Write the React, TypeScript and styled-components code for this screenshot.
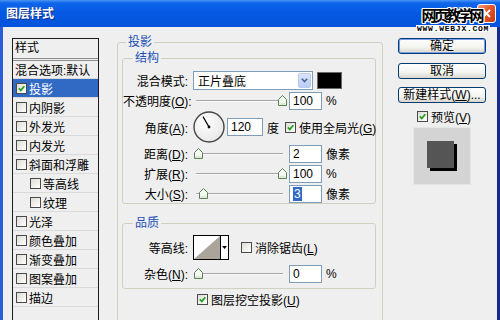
import React from "react";
import styled, { createGlobalStyle } from "styled-components";

const Global = createGlobalStyle`
  html, body { margin: 0; padding: 0; background: #efefef; }
  body {
    font-family: "Liberation Sans", "Noto Sans CJK SC", sans-serif;
    font-size: 12px;
    color: #000;
  }
  * { box-sizing: border-box; }
`;

const Window = styled.div`
  position: relative;
  width: 500px;
  height: 320px;
  overflow: hidden;
  display: flex;
  flex-direction: column;
  background: #efefef;
`;

const TitleBar = styled.div`
  height: 27px;
  flex: none;
  display: flex;
  align-items: center;
  padding-left: 6px;
  background: linear-gradient(180deg, #4a94f5 0px, #0f66ea 3px, #0559e3 45%, #0452db 100%);
  color: #fff;
  font-weight: bold;
  font-size: 12px;
  line-height: 14px;
`;

const TitleText = styled.span`
  flex: 1;
  text-shadow: 1px 1px 0 #0a2c8c;
`;

const CloseButton = styled.div`
  width: 19px;
  height: 19px;
  margin-right: 4px;
  border: 1px solid #fff;
  border-radius: 3px;
  background: linear-gradient(135deg, #f19a7a 0%, #e2572f 45%, #c9380f 100%);
  display: flex;
  align-items: center;
  justify-content: center;
`;

const Watermark = styled.div`
  position: absolute;
  top: 7px;
  left: 416px;
  display: flex;
  flex-direction: column;
  align-items: center;
  pointer-events: none;
`;

const WatermarkTitle = styled.span`
  font-family: "Noto Sans CJK SC", sans-serif;
  font-size: 15px;
  line-height: 16px;
  height: 16px;
  letter-spacing: -3px;
  padding-right: 3px;
  font-weight: bold;
  color: #000;
  text-shadow: 1px 0 0 #fff, -1px 0 0 #fff, 0 1px 0 #fff, 0 -1px 0 #fff, 1px 1px 0 #fff, -1px -1px 0 #fff, 1px -1px 0 #fff, -1px 1px 0 #fff;
`;

const WatermarkUrl = styled.span`
  margin-top: 2px;
  font-family: "Liberation Mono", monospace;
  font-weight: bold;
  font-size: 8px;
  line-height: 7px;
  height: 7px;
  letter-spacing: 0.75px;
  background: #fff;
  color: #000;
  padding: 0 1px;
`;

const Frame = styled.div`
  flex: 1;
  display: flex;
  align-items: flex-start;
  border-left: 3px solid #2a5fd8;
  border-right: 3px solid #16298f;
  padding-left: 9px;
  background: #efefef;
  min-height: 0;
  overflow: hidden;
`;

/* ---------- left style list ---------- */
const StyleList = styled.div`
  flex: none;
  width: 87px;
  height: 300px;
  margin-top: 11px;
  border: 1px solid #1c1c1c;
  background: #efefef;
`;

const ListHeader = styled.div`
  height: 22px;
  line-height: 19px;
  padding-left: 2px;
  border-bottom: 3px double #8e8e8e;
`;

const ListRow = styled.div<{ $indent?: number; $selected?: boolean; $h?: number }>`
  height: ${(p) => p.$h ?? 19}px;
  display: flex;
  align-items: center;
  gap: 2px;
  padding-left: ${(p) => p.$indent ?? 3}px;
  border-bottom: 1px solid #dadada;
  background: ${(p) => (p.$selected ? "#316ac5" : "transparent")};
  color: ${(p) => (p.$selected ? "#fff" : "#000")};
  white-space: nowrap;
`;

/* ---------- checkbox ---------- */
const Box = styled.span`
  width: 11px;
  height: 11px;
  flex: none;
  display: inline-flex;
  align-items: center;
  justify-content: center;
  border: 1px solid #4a4a4a;
  background: linear-gradient(135deg, #dedcd4 0%, #ffffff 100%);
`;

const Check = ({ on }: { on?: boolean }) => (
  <Box>
    {on && (
      <svg width="7" height="7" viewBox="0 0 7 7">
        <path d="M0.8 3.4 L2.8 5.4 L6.3 1.2" fill="none" stroke="#21a121" strokeWidth="1.7" />
      </svg>
    )}
  </Box>
);

const CheckLabel = styled.span<{ $gap?: number }>`
  display: inline-flex;
  align-items: center;
  gap: ${(p) => p.$gap ?? 3}px;
  white-space: nowrap;
`;

/* ---------- main groups ---------- */
const MainCol = styled.div`
  flex: none;
  width: 266px;
  margin-left: 18px;
  margin-top: 8px;
`;

const OuterGroup = styled.fieldset`
  margin: 0;
  min-width: 0;
  height: 300px;
  padding: 0 6px 0 4px;
  border: 1px solid #d0d0bf;
  border-radius: 3px;
`;

const Legend = styled.legend<{ $ml: number }>`
  margin-left: ${(p) => p.$ml}px;
  padding: 0 2px;
  color: #1d4fb8;
  font-size: 12px;
  line-height: 14px;
`;

const SubGroup = styled.fieldset<{ $h: number; $pt: number; $mt: number }>`
  margin: ${(p) => p.$mt}px 0 0 0;
  min-width: 0;
  height: ${(p) => p.$h}px;
  padding: ${(p) => p.$pt}px 0 0 0;
  border: 1px solid #d0d0bf;
  border-radius: 3px;
`;

const Rows = styled.div<{ $gap: number }>`
  display: flex;
  flex-direction: column;
  gap: ${(p) => p.$gap}px;
`;

const FieldRow = styled.div<{ $h: number }>`
  display: grid;
  grid-template-columns: 65px auto;
  column-gap: 5px;
  align-items: center;
  height: ${(p) => p.$h}px;
`;

const Label = styled.span`
  text-align: right;
  white-space: nowrap;
`;

const Controls = styled.div`
  display: flex;
  align-items: center;
  white-space: nowrap;
`;

const Select = styled.div`
  width: 120px;
  height: 19px;
  border: 1px solid #7f9db9;
  background: #fff;
  display: flex;
  align-items: center;
  padding-left: 4px;
`;

const SelectText = styled.span`
  flex: 1;
`;

const SelectArrow = styled.span`
  width: 13px;
  height: 15px;
  margin-right: 1px;
  border-radius: 2px;
  background: linear-gradient(180deg, #dae5fd 0%, #b7ccf8 100%);
  border: 1px solid #b9cbf3;
  display: flex;
  align-items: center;
  justify-content: center;
`;

const Swatch = styled.span`
  width: 25px;
  height: 17px;
  margin-left: 4px;
  background: #000;
  border: 1px solid #6a6a6a;
`;

const Input = styled.span<{ $w?: number; $ml?: number }>`
  width: ${(p) => p.$w ?? 33}px;
  height: 18px;
  margin-left: ${(p) => p.$ml ?? 3}px;
  border: 1px solid #7f9db9;
  background: #fff;
  padding-left: 3px;
  display: flex;
  align-items: center;
  flex: none;
`;

const Selected = styled.span`
  background: #316ac5;
  color: #fff;
  padding: 0 1px;
  line-height: 14px;
`;

const Unit = styled.span<{ $ml?: number }>`
  margin-left: ${(p) => p.$ml ?? 4}px;
`;

const SliderWrap = styled.div`
  position: relative;
  width: 93px;
  height: 19px;
  flex: none;
  display: flex;
  align-items: center;
  padding: 0 3px;
`;

const Track = styled.div`
  flex: 1;
  height: 2px;
  border-top: 1px solid #a6a6a6;
  border-bottom: 1px solid #fbfbfb;
`;

const Thumb = styled.svg`
  position: absolute;
  top: 4px;
`;

const Slider = ({ pct }: { pct: number }) => (
  <SliderWrap>
    <Track />
    <Thumb width="9" height="11" viewBox="0 0 9 11" style={{ left: Math.round(1 + 84 * pct) }}>
      <path d="M0.5 4.5 L4.5 0.5 L8.5 4.5 V10.5 H0.5 Z" fill="#f3f8f0" stroke="#5d7f5d" />
      <path d="M1.5 8.5 H7.5 V9.5 H1.5 Z" fill="#bfe0b0" />
    </Thumb>
  </SliderWrap>
);

const Dial = () => (
  <svg width="32" height="34" viewBox="0 0 32 34">
    <defs>
      <radialGradient id="dialFill" cx="0.4" cy="0.35" r="0.7">
        <stop offset="0" stopColor="#ffffff" />
        <stop offset="1" stopColor="#e6e6e6" />
      </radialGradient>
    </defs>
    <circle cx="16" cy="17" r="15" fill="url(#dialFill)" stroke="#454545" strokeWidth="1.4" />
    <line x1="16" y1="17" x2="10" y2="6.6" stroke="#000" strokeWidth="1.2" />
    <circle cx="16" cy="17" r="1.4" fill="#000" />
  </svg>
);

const ContourPicker = styled.div`
  display: flex;
  height: 25px;
  border: 1px solid #000;
  background: #fff;
`;

const ContourArrow = styled.span`
  width: 8px;
  border-left: 1px solid #000;
  display: flex;
  align-items: center;
  justify-content: center;
`;

const Spacer = styled.span<{ $w: number }>`
  width: ${(p) => p.$w}px;
  flex: none;
`;

const KnockoutRow = styled.div`
  height: 18px;
  margin-top: 1px;
  padding-left: 75px;
  display: flex;
  align-items: center;
`;

/* ---------- right column ---------- */
const SideCol = styled.div`
  flex: none;
  width: 88px;
  margin-left: 15px;
  margin-top: 11px;
  display: flex;
  flex-direction: column;
`;

const Button = styled.div<{ $default?: boolean; $mb: number }>`
  height: 16px;
  margin-bottom: ${(p) => p.$mb}px;
  border: 1px solid #003c74;
  border-radius: 3px;
  background: linear-gradient(180deg, #ffffff 0%, #f3f3ef 60%, #d9d6cc 100%);
  box-shadow: ${(p) => (p.$default ? "inset 0 0 0 1px #7b9ee6" : "none")};
  display: flex;
  align-items: center;
  justify-content: center;
  white-space: nowrap;
  line-height: 14px;
`;

const PreviewRow = styled.div`
  height: 14px;
  margin-top: -2px;
  padding-left: 19px;
  display: flex;
  align-items: center;
`;

const PreviewBox = styled.div`
  width: 58px;
  height: 58px;
  margin-top: 4px;
  margin-left: 15px;
  background: #d4d4d4;
  border: 1px solid #e6e6e6;
  display: flex;
  align-items: center;
  justify-content: center;
`;

const PreviewSquare = styled.div`
  width: 27px;
  height: 27px;
  margin: 0 3px 3px 0;
  background: #555555;
  box-shadow: 3px 3px 0 #000;
`;

const styleItems: { text: string; indent?: number; on?: boolean; selected?: boolean }[] = [
  { text: "投影", on: true, selected: true },
  { text: "内阴影" },
  { text: "外发光" },
  { text: "内发光" },
  { text: "斜面和浮雕" },
  { text: "等高线", indent: 17 },
  { text: "纹理", indent: 17 },
  { text: "光泽" },
  { text: "颜色叠加" },
  { text: "渐变叠加" },
  { text: "图案叠加" },
  { text: "描边" },
];

export default function App() {
  return (
    <>
      <Global />
      <Window>
        <TitleBar>
          <TitleText>图层样式</TitleText>
          <CloseButton>
            <svg width="9" height="9" viewBox="0 0 9 9">
              <path d="M1 1 L8 8 M8 1 L1 8" stroke="#fff" strokeWidth="1.8" />
            </svg>
          </CloseButton>
        </TitleBar>
        <Frame>
          <StyleList>
            <ListHeader>样式</ListHeader>
            <ListRow $h={18} $indent={2}>混合选项:默认</ListRow>
            {styleItems.map((it) => (
              <ListRow key={it.text} $indent={it.indent} $selected={it.selected}>
                <Check on={it.on} />
                <span>{it.text}</span>
              </ListRow>
            ))}
          </StyleList>

          <MainCol>
            <OuterGroup>
              <Legend $ml={4}>投影</Legend>
              <SubGroup $h={153} $pt={6} $mt={2}>
                <Legend $ml={10}>结构</Legend>
                <Rows $gap={1}>
                  <FieldRow $h={19}>
                    <Label>混合模式:</Label>
                    <Controls>
                      <Select>
                        <SelectText>正片叠底</SelectText>
                        <SelectArrow>
                          <svg width="7" height="5" viewBox="0 0 7 5">
                            <path d="M0.8 0.8 L3.5 3.6 L6.2 0.8" fill="none" stroke="#4d6185" strokeWidth="1.5" />
                          </svg>
                        </SelectArrow>
                      </Select>
                      <Swatch />
                    </Controls>
                  </FieldRow>
                  <FieldRow $h={18}>
                    <Label>不透明度(<u>O</u>):</Label>
                    <Controls>
                      <Slider pct={1} />
                      <Input>100</Input>
                      <Unit>%</Unit>
                    </Controls>
                  </FieldRow>
                  <FieldRow $h={33}>
                    <Label>角度(<u>A</u>):</Label>
                    <Controls>
                      <Dial />
                      <Input $w={36} $ml={2}>120</Input>
                      <Unit>度</Unit>
                      <Spacer $w={6} />
                      <CheckLabel>
                        <Check on />
                        <span>使用全局光(<u>G</u>)</span>
                      </CheckLabel>
                    </Controls>
                  </FieldRow>
                  <FieldRow $h={19}>
                    <Label>距离(<u>D</u>):</Label>
                    <Controls>
                      <Slider pct={0} />
                      <Input>2</Input>
                      <Unit>像素</Unit>
                    </Controls>
                  </FieldRow>
                  <FieldRow $h={19}>
                    <Label>扩展(<u>R</u>):</Label>
                    <Controls>
                      <Slider pct={1} />
                      <Input>100</Input>
                      <Unit>%</Unit>
                    </Controls>
                  </FieldRow>
                  <FieldRow $h={19}>
                    <Label>大小(<u>S</u>):</Label>
                    <Controls>
                      <Slider pct={0.06} />
                      <Input>
                        <Selected>3</Selected>
                      </Input>
                      <Unit>像素</Unit>
                    </Controls>
                  </FieldRow>
                </Rows>
              </SubGroup>

              <SubGroup $h={73} $pt={5} $mt={12}>
                <Legend $ml={10}>品质</Legend>
                <Rows $gap={4}>
                  <FieldRow $h={25}>
                    <Label>等高线:</Label>
                    <Controls>
                      <ContourPicker>
                        <svg width="26" height="23" viewBox="0 0 26 23">
                          <polygon points="0,23 26,0 26,23" fill="#aba49a" />
                        </svg>
                        <ContourArrow>
                          <svg width="5" height="3" viewBox="0 0 5 3">
                            <path d="M0 0 H5 L2.5 3 Z" fill="#000" />
                          </svg>
                        </ContourArrow>
                      </ContourPicker>
                      <Spacer $w={12} />
                      <CheckLabel>
                        <Check />
                        <span>消除锯齿(<u>L</u>)</span>
                      </CheckLabel>
                    </Controls>
                  </FieldRow>
                  <FieldRow $h={19}>
                    <Label>杂色(<u>N</u>):</Label>
                    <Controls>
                      <Slider pct={0} />
                      <Input>0</Input>
                      <Unit>%</Unit>
                    </Controls>
                  </FieldRow>
                </Rows>
              </SubGroup>

              <KnockoutRow>
                <CheckLabel>
                  <Check on />
                  <span>图层挖空投影(<u>U</u>)</span>
                </CheckLabel>
              </KnockoutRow>
            </OuterGroup>
          </MainCol>

          <SideCol>
            <Button $default $mb={9}>确定</Button>
            <Button $mb={8}>取消</Button>
            <Button $mb={8}>
              <span>新建样式(<u>W</u>)...</span>
            </Button>
            <PreviewRow>
              <CheckLabel>
                <Check on />
                <span>预览(<u>V</u>)</span>
              </CheckLabel>
            </PreviewRow>
            <PreviewBox>
              <PreviewSquare />
            </PreviewBox>
          </SideCol>
        </Frame>

        <Watermark>
          <WatermarkTitle>网页教学网</WatermarkTitle>
          <WatermarkUrl>WWW.WEBJX.COM</WatermarkUrl>
        </Watermark>
      </Window>
    </>
  );
}
